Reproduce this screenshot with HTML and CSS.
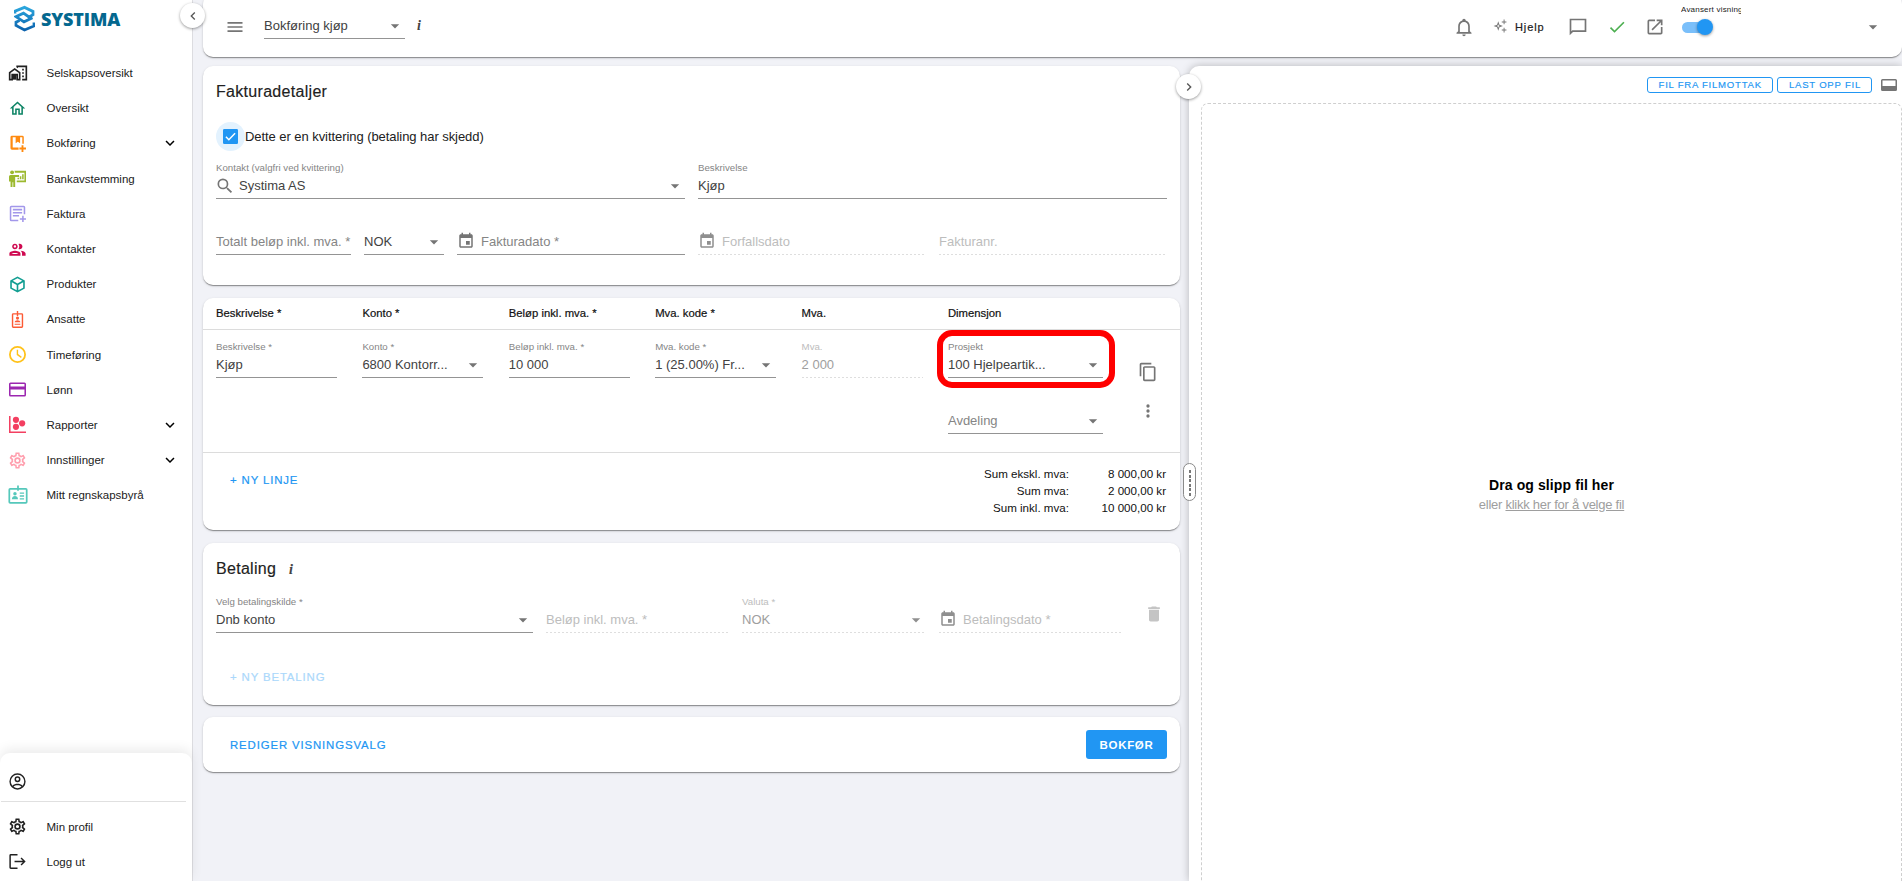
FILE: index.html
```html
<!DOCTYPE html>
<html lang="no">
<head>
  <meta charset="utf-8">
  <title>Bokføring kjøp</title>
  <link rel="stylesheet" href="styles.css">
</head>
<body>

  <!-- icon set -->
  <svg class="sprite">
    <symbol id="caret" viewBox="0 0 24 24"><path d="M7 10l5 5 5-5z"/></symbol>
    <symbol id="chevron" viewBox="0 0 24 24"><path d="M7.41 8.59 12 13.17l4.59-4.58L18 10l-6 6-6-6z"/></symbol>
    <symbol id="calendar" viewBox="0 0 24 24"><path d="M19 3h-1V1h-2v2H8V1H6v2H5c-1.11 0-2 .9-2 2v14c0 1.1.89 2 2 2h14c1.1 0 2-.9 2-2V5c0-1.1-.9-2-2-2zm0 16H5V8h14v11zM12 12h5v5h-5z"/></symbol>
    <symbol id="cog" viewBox="0 0 24 24"><path d="M12 8a4 4 0 0 1 4 4 4 4 0 0 1-4 4 4 4 0 0 1-4-4 4 4 0 0 1 4-4m0 2a2 2 0 0 0-2 2 2 2 0 0 0 2 2 2 2 0 0 0 2-2 2 2 0 0 0-2-2m-2 12c-.25 0-.46-.18-.5-.42l-.37-2.65c-.63-.25-1.17-.59-1.69-.99l-2.49 1.01c-.22.08-.49 0-.61-.22l-2-3.46a.493.493 0 0 1 .12-.64l2.11-1.66L4.5 12l.07-1-2.11-1.63a.493.493 0 0 1-.12-.64l2-3.46c.12-.22.39-.31.61-.22l2.49 1c.52-.39 1.06-.73 1.69-.98l.37-2.65c.04-.24.25-.42.5-.42h4c.25 0 .46.18.5.42l.37 2.65c.63.25 1.17.59 1.69.98l2.49-1c.22-.09.49 0 .61.22l2 3.46c.13.22.07.49-.12.64L19.43 11l.07 1-.07 1 2.11 1.63c.19.15.25.42.12.64l-2 3.46c-.12.22-.39.31-.61.22l-2.49-1c-.52.39-1.06.73-1.69.98l-.37 2.65c-.04.24-.25.42-.5.42h-4m1.25-18-.37 2.61c-1.2.25-2.26.89-3.03 1.78L5.44 7.35l-.75 1.3L6.8 10.2a5.55 5.55 0 0 0 0 3.6l-2.12 1.56.75 1.3 2.43-1.04c.77.88 1.82 1.52 3.01 1.76l.37 2.62h1.52l.37-2.61c1.19-.25 2.24-.89 3.01-1.77l2.43 1.04.75-1.3-2.12-1.55c.4-1.17.4-2.44 0-3.61l2.11-1.55-.75-1.3-2.41 1.04a5.42 5.42 0 0 0-3.03-1.77L12.75 4h-1.5z"/></symbol>
  </svg>

  <aside class="sidebar">
    <div class="logo">
      <svg width="21" height="27" viewBox="0 0 21 27">
        <defs><linearGradient id="lg" x1="0" y1="0" x2="0" y2="1"><stop offset="0" stop-color="#2ba6dd"/><stop offset="1" stop-color="#0b62ad"/></linearGradient></defs>
        <path fill="none" stroke="url(#lg)" stroke-width="2.800" d="M1 8.500V6.200L10.500 2.400 19 6.500v3.200l-4 2.300-5.500-3.800-7.500 3.400 8 5.200 8.500-4M20 17.500v3.500l-9.500 4L2 20.500v-3.300l3.500-1.700"/>
      </svg>
      <span>SYSTIMA</span>
    </div>

    <nav class="menu">
      <a class="item"><svg class="wide black" viewBox="0 0 24 24"><path d="M1 11v10h5v-6h4v6h5V11L8 6zm12 8h-1v-6H4v6H3v-7l5-3.600 5 3.600zM17 7h2v2h-2zm0 4h2v2h-2zm0 4h2v2h-2zM10 3v1.970l2 1.430V5h9v14h-4v2h6V3z"/><path d="M6 14h4v6H6z"/></svg>Selskapsoversikt</a>
      <a class="item"><svg class="green" viewBox="1 1 22 22"><path d="M12 5.690l5 4.500V18h-2v-6H9v6H7v-7.810zM12 3 2 12h3v8h6v-6h2v6h6v-8h3z"/></svg>Oversikt</a>
      <a class="item"><svg class="orange" viewBox="0 1 23 23"><path d="M4 2h14a2 2 0 0 1 2 2v9h-2V4h-3v8l-3-2-3 2V4H5v14h8v3H4a2 2 0 0 1-2-2V4a2 2 0 0 1 2-2zM17 15h2.500v3H23v2.500h-3.500V24H17v-3.500h-3V18h3z"/></svg>Bokføring<svg class="more" viewBox="0 0 24 24"><use href="#chevron"/></svg></a>
      <a class="item"><svg class="olive" viewBox="1 1 22 22"><circle cx="5" cy="4" r="2.500"/><path d="M3 7.500h11v2.500H9v13H6.500v-6h-1v6H3v-7H1V9.500a2 2 0 0 1 2-2zM8 2h15v15H11v-2.500h10V4.500H9zM12 11h2v2h-2zm3-2h2v4h-2zm3-2.500h2V13h-2z"/></svg>Bankavstemming</a>
      <a class="item"><svg class="violet" viewBox="1 1 22 22"><path d="M4 2h16a2 2 0 0 1 2 2v9h-2V4H4v16h9v2H4a2 2 0 0 1-2-2V4a2 2 0 0 1 2-2zM6 6h12v2H6zm0 4h12v2H6zm0 4h8v2H6zM18 15h2v3h3v2h-3v3h-2v-3h-3v-2h3z"/></svg>Faktura</a>
      <a class="item"><svg class="crimson" viewBox="1.500 1.500 21.500 21.500"><path d="M9 13.750c-2.340 0-7 1.170-7 3.500V20h14v-2.750c0-2.330-4.660-3.500-7-3.500zM4.340 18c.84-.580 2.870-1.250 4.660-1.250s3.820.670 4.660 1.250zM9 12c1.930 0 3.500-1.570 3.500-3.500S10.930 5 9 5 5.500 6.570 5.500 8.500 7.070 12 9 12zm0-5c.83 0 1.500.67 1.500 1.500S9.830 10 9 10s-1.500-.67-1.500-1.500S8.170 7 9 7zm7.040 6.810c1.160.84 1.960 1.960 1.960 3.440V20h4.500v-2.750c0-2.020-3.500-3.170-6.460-3.440zM15 12c1.930 0 3.500-1.570 3.500-3.500S16.930 5 15 5c-.54 0-1.040.13-1.500.35.63.89 1 1.980 1 3.150s-.37 2.260-1 3.150c.46.22.96.35 1.500.35z"/></svg>Kontakter</a>
      <a class="item"><svg class="teal" viewBox="1.500 1.500 21 21"><path d="M12 2 3 7v10l9 5 9-5V7zm0 2.300L17.900 7.500 12 10.800 6.100 7.500zM5 9.200l6 3.300v6.700l-6-3.300zm8 10V12.500l6-3.300v6.700z"/></svg>Produkter</a>
      <a class="item"><svg class="tomato" viewBox="0 0 24 24"><path d="M11 0h2v3h5a2 2 0 0 1 2 2v17a2 2 0 0 1-2 2H6a2 2 0 0 1-2-2V5a2 2 0 0 1 2-2h5zM6 5v17h12V5h-5v2h-2V5z"/><circle cx="12" cy="10" r="2.200"/><path d="M8 16c0-4 8-4 8 0zM8 18h8v1.500H8z"/></svg>Ansatte</a>
      <a class="item"><svg class="yellow" viewBox="1 1 22 22"><path d="M12 1a11 11 0 1 0 0 22 11 11 0 0 0 0-22zm0 2.300a8.700 8.700 0 1 1 0 17.400 8.700 8.700 0 0 1 0-17.400zM11 6h1.800v5.500l4.700 3.500-1 1.500-5.500-4z"/></svg>Timeføring</a>
      <a class="item"><svg class="purple" viewBox="1 1 22 22"><path d="M3 3h18a2 2 0 0 1 2 2v14a2 2 0 0 1-2 2H3a2 2 0 0 1-2-2V5a2 2 0 0 1 2-2zm0 2v3h18V5zm0 7v7h18v-7z"/></svg>Lønn</a>
      <a class="item"><svg class="rose" viewBox="1 1 22 22"><path d="M1 1h2v20h20v2H1z"/><circle cx="10" cy="6" r="4"/><circle cx="10" cy="15" r="4"/><circle cx="18" cy="10.500" r="4"/></svg>Rapporter<svg class="more" viewBox="0 0 24 24"><use href="#chevron"/></svg></a>
      <a class="item"><svg class="pink" viewBox="1.500 1.500 21 21"><use href="#cog" width="24" height="24"/></svg>Innstillinger<svg class="more" viewBox="0 0 24 24"><use href="#chevron"/></svg></a>
      <a class="item"><svg class="wide aqua" viewBox="0.500 0.500 23 23"><path d="M11 1h2v3h8a2 2 0 0 1 2 2v14a2 2 0 0 1-2 2H3a2 2 0 0 1-2-2V6a2 2 0 0 1 2-2h8zM3 6v14h18V6h-8v1h-2V6zM14 9h5v1.700h-5zm0 3.300h5V14h-5zm0 3.300h5v1.700h-5z"/><circle cx="8.500" cy="10.500" r="2"/><path d="M5 17c0-5 7-5 7 0z"/></svg>Mitt regnskapsbyrå</a>
    </nav>

    <div class="profile">
      <a class="item user"><svg class="black" viewBox="0.500 0.500 23 23"><path d="M12 1a11 11 0 1 0 0 22 11 11 0 0 0 0-22zm0 2a9 9 0 0 1 7 14.600C17 15.500 14.500 15 12 15s-5 .5-7 2.600A9 9 0 0 1 12 3zm0 14c2.200 0 4 .6 5.400 2.200a9 9 0 0 1-10.800 0C8 17.600 9.800 17 12 17zm0-12a4 4 0 1 0 0 8 4 4 0 0 0 0-8zm0 2a2 2 0 1 1 0 4 2 2 0 0 1 0-4z"/></svg></a>
      <a class="item"><svg class="black" viewBox="1.500 1.500 21 21"><use href="#cog" width="24" height="24"/></svg>Min profil</a>
      <a class="item"><svg class="black" viewBox="0.500 0.500 23 23"><path d="M12 2v2H3v16h9v2H3a2 2 0 0 1-2-2V4a2 2 0 0 1 2-2zM17.500 6.500 23 12l-5.500 5.500-1.400-1.400L19.200 13H8v-2h11.200l-3.100-3.100z"/></svg>Logg ut</a>
    </div>
    <button class="toggle toggle-left"><svg viewBox="0 0 24 24"><path d="M15.410 16.590 10.830 12l4.580-4.590L14 6l-6 6 6 6z"/></svg></button>
  </aside>

  <main>
    <header class="topbar">
      <svg class="icon burger" viewBox="0 0 24 24"><path d="M3 6h18v2H3zm0 5h18v2H3zm0 5h18v2H3z"/></svg>
      <div class="value page-select">Bokføring kjøp<svg class="caret"><use href="#caret"/></svg></div>
      <i class="info">i</i>

      <div class="tools">
        <svg class="icon bell" viewBox="0 0 24 24"><path d="M10 21h4c0 1.100-.9 2-2 2s-2-.9-2-2m11-2v1H3v-1l2-2v-6c0-3.100 2-5.800 5-6.700V4c0-1.100.9-2 2-2s2 .9 2 2v.3c3 .9 5 3.600 5 6.700v6zm-4-8c0-2.800-2.200-5-5-5s-5 2.200-5 5v7h10z"/></svg>
        <svg class="icon spark" viewBox="0 0 24 24"><path fill-rule="evenodd" d="M9 4l2 6 6 2-6 2-2 6-2-6-6-2 6-2zm0 5-.8 2.200L6 12l2.200.8L9 15l.8-2.200L12 12l-2.200-.8zM18.200 1h1.600v3.200H23v1.600h-3.200V9h-1.600V5.800H15V4.200h3.200zM18.200 15h1.600v3.200H23v1.600h-3.200V23h-1.600v-3.200H15v-1.600h3.200z"/></svg>
        <span class="help">Hjelp</span>
        <svg class="icon chat" viewBox="0 0 24 24"><path d="M22 2H2v20l4-4h16zM4 4h16v12H5.200L4 17.200z"/></svg>
        <svg class="icon check" viewBox="0 0 24 24"><path d="M21 7 9 19l-5.500-5.500 1.410-1.410L9 16.170 19.590 5.590z"/></svg>
        <svg class="icon open" viewBox="0 0 24 24"><path d="M19 19H5V5h7V3H5a2 2 0 0 0-2 2v14a2 2 0 0 0 2 2h14c1.100 0 2-.9 2-2v-7h-2zM14 3v2h3.590l-9.830 9.830 1.410 1.410L19 6.410V10h2V3z"/></svg>
        <div class="advanced">
          <small>Avansert visning</small>
          <span class="switch"></span>
        </div>
        <svg class="caret company"><use href="#caret"/></svg>
      </div>
    </header>

    <div class="content">
      <div class="forms">

        <section class="card invoice">
          <h2>Fakturadetaljer</h2>
          <label class="receipt">
            <span class="halo"><svg viewBox="0 0 18 18"><rect width="18" height="18" rx="1.500" fill="#2196f3"/><path d="M3.500 9.300 7 12.800l7.500-7.600" fill="none" stroke="#fff" stroke-width="1.800"/></svg></span>
            Dette er en kvittering (betaling har skjedd)
          </label>
          <div class="row two">
            <div class="field"><label>Kontakt (valgfri ved kvittering)</label><div class="value"><svg class="icon search" viewBox="0 0 24 24"><path d="M15.500 14h-.79l-.28-.27A6.470 6.470 0 0 0 16 9.500 6.500 6.500 0 1 0 9.500 16c1.610 0 3.090-.59 4.230-1.570l.27.28v.79l5 4.990L20.490 19zm-6 0a4.500 4.500 0 1 1 0-9 4.500 4.500 0 0 1 0 9z"/></svg>Systima AS<svg class="caret"><use href="#caret"/></svg></div></div>
            <div class="field"><label>Beskrivelse</label><div class="value">Kjøp</div></div>
          </div>
          <div class="row amounts">
            <div class="field"><div class="value empty">Totalt beløp inkl. mva. *</div></div>
            <div class="field"><div class="value">NOK<svg class="caret"><use href="#caret"/></svg></div></div>
            <div class="field"><div class="value empty"><svg class="icon cal"><use href="#calendar"/></svg>Fakturadato *</div></div>
            <div class="field disabled"><div class="value"><svg class="icon cal"><use href="#calendar"/></svg>Forfallsdato</div></div>
            <div class="field disabled"><div class="value">Fakturanr.</div></div>
          </div>
        </section>

        <section class="card lines">
          <div class="line-head">
            <span>Beskrivelse *</span><span>Konto *</span><span>Beløp inkl. mva. *</span><span>Mva. kode *</span><span>Mva.</span><span>Dimensjon</span>
          </div>
          <div class="line-row">
            <div class="field"><label>Beskrivelse *</label><div class="value">Kjøp</div></div>
            <div class="field"><label>Konto *</label><div class="value">6800 Kontorr...<svg class="caret"><use href="#caret"/></svg></div></div>
            <div class="field"><label>Beløp inkl. mva. *</label><div class="value">10 000</div></div>
            <div class="field"><label>Mva. kode *</label><div class="value">1 (25.00%) Fr...<svg class="caret"><use href="#caret"/></svg></div></div>
            <div class="field disabled filled"><label>Mva.</label><div class="value">2 000</div></div>
            <div class="dimensions">
              <div class="field marked"><label>Prosjekt</label><div class="value">100 Hjelpeartik...<svg class="caret"><use href="#caret"/></svg></div></div>
              <div class="field"><div class="value empty">Avdeling<svg class="caret"><use href="#caret"/></svg></div></div>
            </div>
            <div class="actions">
              <svg class="icon" viewBox="0 0 24 24"><path d="M16 1H4c-1.100 0-2 .9-2 2v14h2V3h12zm3 4H8c-1.100 0-2 .9-2 2v14c0 1.100.9 2 2 2h11c1.100 0 2-.9 2-2V7c0-1.100-.9-2-2-2zm0 16H8V7h11z"/></svg>
              <svg class="icon dots" viewBox="0 0 24 24"><circle cx="12" cy="6" r="2"/><circle cx="12" cy="12" r="2"/><circle cx="12" cy="18" r="2"/></svg>
            </div>
          </div>
          <div class="line-foot">
            <button class="text-btn">+ NY LINJE</button>
            <div class="sums">
              <span>Sum ekskl. mva:</span><span>8 000,00 kr</span>
              <span>Sum mva:</span><span>2 000,00 kr</span>
              <span>Sum inkl. mva:</span><span>10 000,00 kr</span>
            </div>
          </div>
        </section>

        <section class="card payment">
          <h2>Betaling <i class="info">i</i></h2>
          <div class="row pay">
            <div class="field"><label>Velg betalingskilde *</label><div class="value">Dnb konto<svg class="caret"><use href="#caret"/></svg></div></div>
            <div class="field disabled"><div class="value">Beløp inkl. mva. *</div></div>
            <div class="field disabled filled"><label>Valuta *</label><div class="value">NOK<svg class="caret"><use href="#caret"/></svg></div></div>
            <div class="field disabled"><div class="value"><svg class="icon cal"><use href="#calendar"/></svg>Betalingsdato *</div></div>
            <svg class="icon trash" viewBox="0 0 24 24"><path d="M6 19c0 1.100.9 2 2 2h8c1.100 0 2-.9 2-2V7H6zM19 4h-3.500l-1-1h-5l-1 1H5v2h14z"/></svg>
          </div>
          <button class="text-btn" disabled>+ NY BETALING</button>
        </section>

        <section class="card footer">
          <button class="text-btn">REDIGER VISNINGSVALG</button>
          <button class="primary">BOKFØR</button>
        </section>
      </div>

      <div class="files">
        <button class="toggle toggle-right"><svg viewBox="0 0 24 24"><path d="M8.590 16.590 13.170 12 8.590 7.410 10 6l6 6-6 6z"/></svg></button>
        <div class="handle"></div>
        <div class="file-bar">
          <button>FIL FRA FILMOTTAK</button>
          <button>LAST OPP FIL</button>
          <svg width="16" height="12" viewBox="0 0 16 12"><path fill="#757575" fill-rule="evenodd" d="M1.500 0h13A1.500 1.500 0 0 1 16 1.500v9a1.500 1.500 0 0 1-1.500 1.500h-13A1.500 1.500 0 0 1 0 10.500v-9A1.500 1.500 0 0 1 1.500 0zM1.500 1.500V7h13V1.500z"/></svg>
        </div>
        <div class="drop">
          <b>Dra og slipp fil her</b>
          <span>eller <u>klikk her for å velge fil</u></span>
        </div>
      </div>
    </div>
  </main>

</body>
</html>
```
FILE: styles.css
```css
* {
  box-sizing: border-box;
}

body {
  margin: 0;
  display: flex;
  height: 100vh;
  overflow: hidden;
  font-family: "Liberation Sans", Arial, sans-serif;
  font-size: 13px;
  color: #212121;
  background-color: #f1f2f7;
}

button {
  font-family: inherit;
  border: none;
  background: none;
  padding: 0;
}

.sprite {
  display: none;
}

.icon {
  width: 20px;
  height: 20px;
  flex: none;
  fill: #757575;
}

.caret {
  width: 20px;
  height: 20px;
  flex: none;
  margin-left: auto;
  fill: #757575;
}

.info {
  font-family: "Liberation Serif", serif;
  font-weight: bold;
  font-size: 14px;
  color: #424242;
}

/* Sidebar */
.sidebar {
  position: relative;
  z-index: 2;
  width: 193px;
  flex: none;
  display: flex;
  flex-direction: column;
  background-color: #fff;
  border-right: 1px solid #dcdce0;
}

.logo {
  display: flex;
  height: 55.500px;
  padding: 5px 0 0 14px;
  gap: 6px;
  font-family: "Open Sans", sans-serif;
  font-size: 18px;
  font-weight: 800;
  line-height: 29px;
  letter-spacing: -0.150px;
  color: #04688f;
}

.item {
  display: flex;
  align-items: center;
  height: 35.200px;
  padding: 0 13px 0 9px;
  font-size: 11.500px;
}

.item svg {
  width: 17px;
  height: 17px;
  margin-right: 20.500px;
}

.item svg.wide {
  width: 20px;
  height: 20px;
  margin: 0 19px 0 -1.500px;
}

.item svg.more {
  width: 18px;
  height: 18px;
  margin: 0 0 0 auto;
}

.black { fill: #212121; }
.green { fill: #0d8465; }
.orange { fill: #ff8a0f; }
.olive { fill: #9cb92f; }
.violet { fill: #a297ea; }
.crimson { fill: #cf0950; }
.teal { fill: #129e92; }
.tomato { fill: #fc5a35; }
.yellow { fill: #ffc21a; }
.purple { fill: #9c27b0; }
.rose { fill: #f33f61; }
.pink { fill: #ff9fae; }
.aqua { fill: #55c8bb; }

.profile {
  margin-top: auto;
  height: 128px;
  border-radius: 10px 10px 0 0;
  box-shadow: 0 -4px 12px rgba(0, 0, 0, 0.08);
}

.profile .user {
  height: 49px;
  margin: 0 6px 7px 1px;
  padding: 9px 0 0 8px;
  border-bottom: 1px solid #e0e0e0;
}

.toggle {
  position: absolute;
  display: flex;
  align-items: center;
  justify-content: center;
  width: 25px;
  height: 25px;
  border-radius: 50%;
  background-color: #fff;
  box-shadow: 0 1px 3px rgba(0, 0, 0, 0.4);
}

.toggle svg {
  width: 16px;
  height: 16px;
  fill: #555;
}

.toggle-left {
  top: 3px;
  right: -13px;
}

/* Top bar */
main {
  flex: 1;
  min-width: 0;
  display: flex;
  flex-direction: column;
  padding-left: 10px;
}

.card,
.topbar {
  background-color: #fff;
  border-radius: 10px;
  box-shadow: 0 2px 1px -1px rgba(0, 0, 0, 0.2), 0 1px 1px rgba(0, 0, 0, 0.2), 0 1px 3px rgba(0, 0, 0, 0.14);
}

.topbar {
  display: flex;
  align-items: center;
  height: 63px;
  flex: none;
  margin-top: -6px;
  padding: 3px 19px 0 22px;
}

.page-select {
  width: 141px;
  height: 20px;
  margin: -1px 12px 0 19px;
}

.topbar .info {
  margin-top: -2px;
}

.tools {
  display: flex;
  align-items: center;
  margin-left: auto;
}

.spark {
  width: 14px;
  height: 14px;
  margin: -2px 8px 0 19px;
}

.help {
  width: 31px;
  font-size: 11px;
  letter-spacing: 0.900px;
  -webkit-text-stroke: 0.200px;
}

.chat {
  margin: 0 19px 0 22px;
}

.check {
  fill: #4caf50;
  margin-right: 18px;
}

.advanced {
  position: relative;
  margin-left: 17px;
}

.advanced small {
  position: absolute;
  top: -17px;
  left: -1px;
  width: 60px;
  overflow: hidden;
  white-space: nowrap;
  font-size: 8px;
  letter-spacing: 0.200px;
}

.switch {
  display: flex;
  align-items: center;
  width: 27px;
  height: 11px;
  border-radius: 6px;
  background-color: #7abffa;
}

.switch::after {
  content: "";
  flex: none;
  width: 16px;
  height: 16px;
  margin-left: 15px;
  border-radius: 50%;
  background-color: #2196f3;
  box-shadow: 0 1px 3px rgba(0, 0, 0, 0.4);
}

.company {
  margin-left: 154px;
}

/* Content */
.content {
  flex: 1;
  display: flex;
  min-height: 0;
  padding-top: 9px;
  gap: 9px;
}

.forms {
  width: 977px;
}

.card {
  margin-bottom: 12px;
  padding: 0 13px;
}

h2 {
  margin: 0;
  font-size: 16px;
  font-weight: normal;
  letter-spacing: 0.300px;
  line-height: 20px;
  -webkit-text-stroke: 0.150px;
}

h2 .info {
  margin-left: 8px;
}

.field {
  display: flex;
  flex-direction: column;
  justify-content: flex-end;
  height: 37px;
}

.field label {
  font-size: 9.700px;
  line-height: 12px;
  color: #858585;
}

.value {
  display: flex;
  align-items: center;
  height: 25px;
  padding-bottom: 1px;
  border-bottom: 1px solid #949494;
  white-space: pre;
  color: #424242;
}

.field .value .caret {
  margin: 1px 0 0 auto;
}

.value.empty {
  color: #858585;
}

.disabled label,
.disabled .value {
  color: #bdbdbd;
}

.filled .value {
  color: #9e9e9e;
}

.disabled .value {
  border-bottom: none;
  padding-bottom: 2px;
  background: repeating-linear-gradient(to right, #dedede 0, #dedede 2px, #fff 2px, #fff 4px) left bottom / 100% 1px no-repeat;
}

.disabled .icon,
.disabled .caret {
  fill: #8f8f8f;
}

.cal {
  width: 18px;
  height: 18px;
  margin: -2px 6px 0 0;
}

.search {
  margin: 1px 4px 0 -1px;
}

.row {
  display: grid;
  column-gap: 13px;
}

/* Invoice details */
.invoice {
  height: 219px;
  margin-bottom: 13px;
  padding-top: 16px;
}

.receipt {
  display: flex;
  align-items: center;
  height: 29px;
  margin: 20px 0 11px;
  letter-spacing: -0.060px;
  line-height: 27px;
}

.halo {
  display: flex;
  align-items: center;
  justify-content: center;
  width: 29px;
  height: 29px;
  border-radius: 50%;
  background-color: #e3f2fe;
}

.halo svg {
  width: 15px;
  height: 15px;
}

.two {
  grid-template-columns: 469px 469px;
  margin-bottom: 19px;
}

.amounts {
  grid-template-columns: 135px 80px 228px 228px 227px;
}

/* Invoice lines */
.lines {
  height: 232px;
  margin-bottom: 13px;
  padding: 0;
}

.line-head,
.line-row {
  display: grid;
  grid-template-columns: repeat(5, 121px) 155px 40px;
  column-gap: 25.400px;
  padding-left: 13px;
  border-bottom: 1px solid #dcdcdc;
}

.line-head {
  height: 32px;
  line-height: 30px;
  font-size: 11.300px;
  color: #111;
  -webkit-text-stroke: 0.200px;
}

.line-row {
  height: 123px;
  padding-top: 11px;
}

.dimensions {
  display: flex;
  flex-direction: column;
  gap: 19px;
}

/* highlighted field */
.marked {
  position: relative;
}

.marked::after {
  content: "";
  position: absolute;
  inset: -11px -12px -10px -11px;
  border: 6px solid #f00;
  border-radius: 15px;
}

.actions {
  display: flex;
  flex-direction: column;
  align-items: center;
  gap: 19px;
  padding-top: 21px;
}

.line-foot {
  display: flex;
  justify-content: space-between;
  padding: 12px 14px 0 27px;
}

.line-foot .text-btn {
  align-self: flex-start;
  margin-top: 8px;
}

.sums {
  display: grid;
  grid-template-columns: auto 97px;
  text-align: right;
  font-size: 11.600px;
  line-height: 17px;
  color: #111;
}

.text-btn {
  font-size: 11.400px;
  line-height: 15px;
  letter-spacing: 0.870px;
  color: #2196f3;
  -webkit-text-stroke: 0.200px;
}

.text-btn:disabled {
  color: #abd8fb;
}

/* Payment */
.payment {
  height: 162px;
  padding-top: 16px;
}

.pay {
  grid-template-columns: 317px 183px 184px 183px auto;
  margin: 16px 0 36px;
}

.trash {
  justify-self: end;
  margin: 8px 3px 0 0;
  fill: #c4c4c4;
}

.payment .text-btn {
  margin-left: 14px;
}

.footer {
  display: flex;
  align-items: center;
  justify-content: space-between;
  height: 55px;
  padding: 0 13px 0 27px;
}

.footer .text-btn {
  padding-top: 2px;
}

.primary {
  width: 81px;
  height: 29px;
  border-radius: 3px;
  background-color: #2196f3;
  color: #fff;
  font-size: 11.500px;
  font-weight: bold;
  letter-spacing: 0.700px;
}

/* File panel */
.files {
  position: relative;
  flex: 1;
  background-color: #fff;
  border-radius: 10px 0 0 0;
  box-shadow: 0 0 8px rgba(0, 0, 0, 0.25);
}

.toggle-right {
  top: 8px;
  left: -13px;
}

.handle {
  position: absolute;
  top: 397px;
  left: -6px;
  width: 13px;
  height: 38px;
  border: 1px solid #8a8a8a;
  border-radius: 7px;
  background-color: #fff;
}

.handle::after {
  content: "";
  position: absolute;
  top: 6px;
  left: 5px;
  width: 2px;
  height: 26px;
  background: repeating-linear-gradient(#777 0, #777 3px, #fff 3px, #fff 4.600px);
}

.file-bar {
  display: flex;
  align-items: center;
  justify-content: flex-end;
  gap: 4px;
  height: 37px;
  padding: 0 5px 0 0;
}

.file-bar button {
  height: 16px;
  padding: 0 10px 0 11px;
  border: 1px solid #2196f3;
  border-radius: 3px;
  font-size: 9.600px;
  line-height: 13px;
  letter-spacing: 0.750px;
  color: #2196f3;
  -webkit-text-stroke: 0.150px;
}

.file-bar svg {
  margin-left: 5px;
}

.drop {
  display: flex;
  flex-direction: column;
  align-items: center;
  justify-content: center;
  height: 784px;
  margin-left: 12px;
  border: 1px dashed #cfcfcf;
  border-radius: 7px;
  line-height: 20px;
  letter-spacing: -0.250px;
  color: #9e9e9e;
}

.drop b {
  font-size: 14px;
  letter-spacing: 0.100px;
  color: #000;
}
```
